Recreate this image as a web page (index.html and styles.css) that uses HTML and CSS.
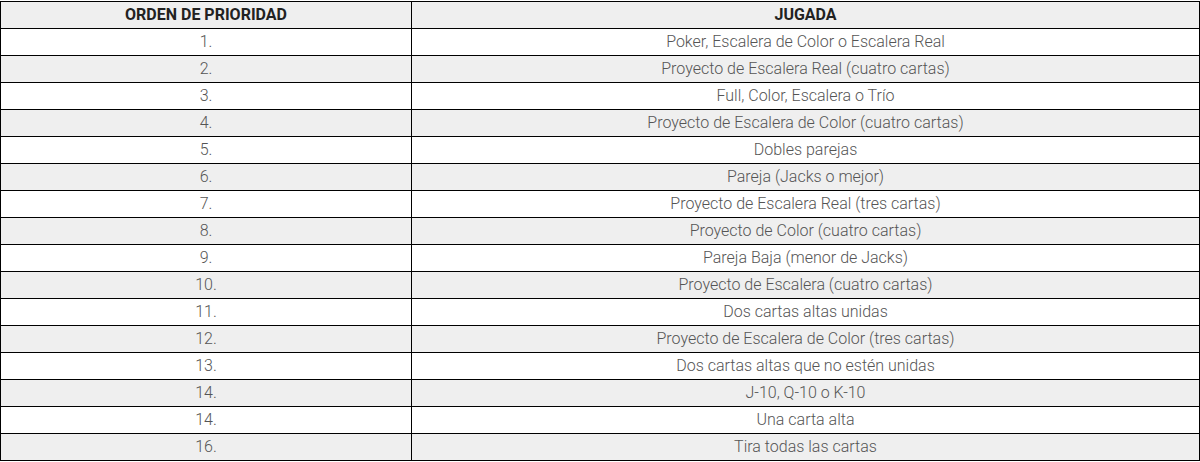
FILE: index.html
```html
<!DOCTYPE html>
<html lang="es">
<head>
<meta charset="utf-8">
<link rel="stylesheet" href="styles.css">
</head>
<body>
<table class="prio">
  <colgroup><col class="c1"><col class="c2"></colgroup>
  <thead>
    <tr><th>ORDEN DE PRIORIDAD</th><th>JUGADA</th></tr>
  </thead>
  <tbody>
    <tr><td>1.</td><td>Poker, Escalera de Color o Escalera Real</td></tr>
    <tr><td>2.</td><td>Proyecto de Escalera Real (cuatro cartas)</td></tr>
    <tr><td>3.</td><td>Full, Color, Escalera o Trío</td></tr>
    <tr><td>4.</td><td>Proyecto de Escalera de Color (cuatro cartas)</td></tr>
    <tr><td>5.</td><td>Dobles parejas</td></tr>
    <tr><td>6.</td><td>Pareja (Jacks o mejor)</td></tr>
    <tr><td>7.</td><td>Proyecto de Escalera Real (tres cartas)</td></tr>
    <tr><td>8.</td><td>Proyecto de Color (cuatro cartas)</td></tr>
    <tr><td>9.</td><td>Pareja Baja (menor de Jacks)</td></tr>
    <tr><td>10.</td><td>Proyecto de Escalera (cuatro cartas)</td></tr>
    <tr><td>11.</td><td>Dos cartas altas unidas</td></tr>
    <tr><td>12.</td><td>Proyecto de Escalera de Color (tres cartas)</td></tr>
    <tr><td>13.</td><td>Dos cartas altas que no estén unidas</td></tr>
    <tr><td>14.</td><td>J-10, Q-10 o K-10</td></tr>
    <tr><td>14.</td><td>Una carta alta</td></tr>
    <tr><td>16.</td><td>Tira todas las cartas</td></tr>
  </tbody>
</table>
</body>
</html>
```
FILE: styles.css
```css
html, body {
  margin: 0;
  padding: 0;
  background: #fff;
}
body {
  padding-top: 1px;
  font-family: Roboto, "Liberation Sans", sans-serif;
}
.prio {
  border-collapse: collapse;
  width: 1200px;
  table-layout: fixed;
}
.c1 { width: 411px; }
.prio th, .prio td {
  border: 1px solid #000;
  height: 27px;
  padding: 0 8px;
  text-align: center;
  vertical-align: middle;
  line-height: 18px;
  box-sizing: border-box;
}
.prio th {
  background: #efefef;
  color: #222;
  font-weight: 700;
  font-size: 16px;
}
.prio td {
  color: #555;
  font-weight: 300;
  font-size: 16px;
}
.prio tbody tr:nth-child(even) td {
  background: #efefef;
}
```
